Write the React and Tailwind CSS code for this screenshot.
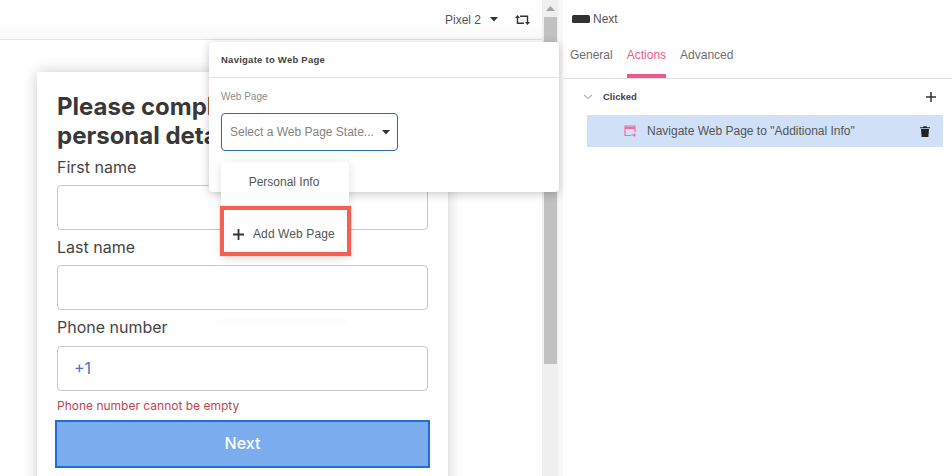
import React from "react";

const arial = "font-['Liberation_Sans',Arial,sans-serif]";
const inter = "font-['Inter',sans-serif]";

function Field({ label, children }) {
  return (
    <div>
      <div className="text-[16px] leading-[20px] text-[#454545]">{label}</div>
      <div className="mt-[8px] h-[45px] rounded-[4px] border border-[#c8c8c8] bg-white flex items-center pl-[16px] pb-[2px] text-[16px] text-[#4a70d0]">
        {children}
      </div>
    </div>
  );
}

function Popover() {
  return (
    <div className={`absolute left-[209px] top-[42px] w-[350px] h-[150px] rounded-[4px] bg-white shadow-[0_2px_10px_rgba(0,0,0,0.22)] ${arial}`}>
      <div className="h-[36px] border-b border-[#e3e3e3] pl-[12px] pt-[11px] text-[9.5px] leading-[14px] font-bold text-[#444444] tracking-[0.25px]">
        Navigate to Web Page
      </div>
      <div className="pl-[12px] pt-[12px] text-[10px] leading-[14px] text-[#8c8c8c]">Web Page</div>
      <div className="ml-[12px] mt-[9px] w-[177px] h-[38px] rounded-[4px] border border-[#2a6cb0] flex items-center pl-[8px] text-[12px] text-[#838383] relative">
        Select a Web Page State...
        <svg className="absolute right-[7px] top-[16px]" width="8" height="5" viewBox="0 0 8 5"><path d="M0 0h8L4 4.5z" fill="#333" /></svg>
      </div>
    </div>
  );
}

function Menu() {
  return (
    <div className={`absolute left-[221px] top-[162px] w-[128px] h-[94px] rounded-[4px] bg-white shadow-[0_2px_10px_rgba(0,0,0,0.14)] ${arial}`}>
      <div className="h-[40px] pr-[2px] flex items-center justify-center text-[12px] text-[#555555]">Personal Info</div>
      <div className="absolute left-[-1px] top-[44px] w-[131px] h-[50px] border-[4px] border-[#f65f53] shadow-[0_0_0_1px_rgba(246,95,83,0.12)] flex items-center pl-[9px] pt-[6px] text-[12px] tracking-[0.1px] text-[#555555] bg-white">
        <svg width="11" height="11" viewBox="0 0 11 11" className="mr-[9px]"><path d="M5.5 0v11M0 5.5h11" stroke="#333" strokeWidth="1.8" /></svg>
        Add Web Page
      </div>
    </div>
  );
}

export default function App() {
  return (
    <div className={`relative flex w-[952px] h-[476px] overflow-hidden bg-white ${arial}`}>
      <div className="w-[542px] h-full flex flex-col bg-white shrink-0">
        <header className="h-[40px] shrink-0 border-b border-[#e3e3e3] bg-gradient-to-b from-white from-50% to-[#f9f9f9] flex items-center justify-end pr-[12px] text-[12px] text-[#555555]">
          <span>Pixel 2</span>
          <svg className="ml-[9px]" width="8" height="5" viewBox="0 0 8 5"><path d="M0 0h8L4 4.5z" fill="#333" /></svg>
          <svg className="ml-[17px]" width="15" height="10" viewBox="0 0 15 10">
            <path d="M2.5 3v5.2H9M5 1.2h7.5V7" fill="none" stroke="#333" strokeWidth="1.4" />
            <path d="M2.5 0L5 3H0zM12.5 10L10 7h5z" fill="#333" />
          </svg>
        </header>
        <div className="flex-1 pl-[37px] pt-[32px]">
          <div className={`w-[411px] h-[420px] bg-white shadow-[0_0_14px_rgba(0,0,0,0.2)] px-[20px] pt-[20px] ${inter}`}>
            <h1 className="text-[24px] leading-[29px] font-bold text-[#383838]">Please complete your<br />personal details</h1>
            <div className="mt-[7px] flex flex-col gap-[7px]">
              <Field label="First name" />
              <Field label="Last name" />
              <div>
                <div className="text-[16px] leading-[20px] text-[#454545]">Phone number</div>
                <div className="mt-[9px] h-[45px] rounded-[4px] border border-[#c8c8c8] bg-white flex items-center pl-[16px] pb-[2px] text-[16px] text-[#4a70d0]">+1</div>
              </div>
            </div>
            <div className="mt-[7px] text-[12px] leading-[16px] text-[#c4454f]">Phone number cannot be empty</div>
            <div className="-mx-[2px] mt-[6px] h-[48px] border-[2px] border-[#1d6fdc] bg-[#7aacee] flex items-center justify-center pb-[2px] text-[16px] font-medium text-white">Next</div>
          </div>
        </div>
      </div>

      <div className="w-[16px] h-full bg-[#efefef] flex flex-col items-center shrink-0">
        <svg className="mt-[6px]" width="9" height="5" viewBox="0 0 9 5"><path d="M0 5L4.5 0 9 5z" fill="#a3a3a3" /></svg>
        <div className="mt-[6px] w-[13px] ml-[1px] h-[347px] bg-[#c1c1c1]" />
      </div>
      <div className="w-[5px] h-full bg-[#f7f7f7] shrink-0" />

      <aside className="flex-1 h-full bg-white text-[12px]">
        <div className="h-[38px] pl-[9px] flex items-center text-[#555555]">
          <span className="w-[18px] h-[8px] rounded-[1.5px] bg-[#333333] mr-[3px]" />
          Next
        </div>
        <div className="h-[41px] border-b border-[#e3e3e3] pl-[7px] flex gap-[14px] text-[#6e6e6e]">
          <span className="pt-[8px]">General</span>
          <span className="pt-[8px] h-[40px] border-b-[4px] border-[#ec5a8c] text-[#ec5a8c]">Actions</span>
          <span className="pt-[8px]">Advanced</span>
        </div>
        <div className="h-[36px] flex items-center pl-[20px] pr-[16px]">
          <svg width="10" height="6" viewBox="0 0 10 6" fill="none"><path d="M1 1l4 3.5L9 1" stroke="#b5b5b5" strokeWidth="1.2" /></svg>
          <span className="ml-[10px] flex-1 text-[9.5px] font-bold text-[#444444]">Clicked</span>
          <svg width="10" height="10" viewBox="0 0 10 10"><path d="M5 0v10M0 5h10" stroke="#333" strokeWidth="1.5" /></svg>
        </div>
        <div className="ml-[24px] mr-[9px] h-[32px] bg-[#cfe0f7] flex items-center pl-[37px] pr-[13px] text-[#555555]">
          <svg width="12" height="12" viewBox="0 0 12 12" fill="none" stroke="#ee6f9b" strokeWidth="1.2">
            <path d="M7 10.5H1V1h10v6" />
            <path d="M1 3h10" strokeWidth="2.2" />
            <path d="M7.5 10h3" strokeWidth="1.2" />
            <path d="M10 8l2 2-2 2z" fill="#ee6f9b" stroke="none" />
          </svg>
          <span className="ml-[11px] flex-1">Navigate Web Page to "Additional Info"</span>
          <svg width="10" height="11" viewBox="0 0 10 11"><path d="M1 3h8l-.6 8H1.6zM0 1.2h3L3.5.3h3L7 1.2h3V2.3H0z" fill="#222" /></svg>
        </div>
      </aside>

      <Popover />
      <Menu />
      <div className="absolute left-[218px] top-[320px] w-[128px] h-[3px] bg-[#fcfcfc] shadow-[0_0_5px_rgba(0,0,0,0.03)]" />
    </div>
  );
}
